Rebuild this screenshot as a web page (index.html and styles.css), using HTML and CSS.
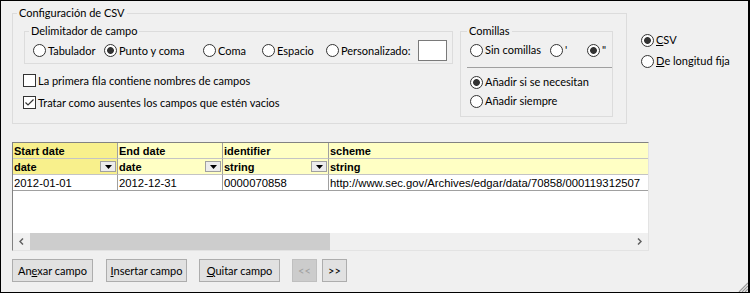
FILE: index.html
```html
<!DOCTYPE html>
<html lang="es">
<head>
    <meta charset="UTF-8">
    <title>Configuración de CSV</title>
    <link rel="stylesheet" href="styles.css">
</head>
<body>
    <div class="window">
        <div class="top">
            <fieldset class="group main">
                <legend>Configuración de CSV</legend>
                <div class="main-body">
                    <div class="left-col">
                        <fieldset class="group delim">
                            <legend>Delimitador de campo</legend>
                            <div class="opt-row">
                                <label class="opt w-tab"><span class="radio"></span>Tabulador</label>
                                <label class="opt w-semi"><span class="radio on"></span>Punto y coma</label>
                                <label class="opt w-comma"><span class="radio"></span>Coma</label>
                                <label class="opt w-space"><span class="radio"></span>Espacio</label>
                                <label class="opt w-custom"><span class="radio"></span>Personalizado:</label>
                                <span class="textbox"></span>
                            </div>
                        </fieldset>
                        <label class="check first"><span class="box"></span>La primera fila contiene nombres de campos</label>
                        <label class="check"><span class="box"><svg width="11" height="11" viewBox="0 0 11 11"><polyline points="1.5,5.5 4,8 9.5,2.5" fill="none" stroke="#333" stroke-width="1.2"/></svg></span>Tratar como ausentes los campos que estén vacios</label>
                    </div>
                    <fieldset class="group quotes">
                        <legend>Comillas</legend>
                        <div class="quote-row">
                            <label class="opt w-none"><span class="radio"></span>Sin comillas</label>
                            <label class="opt w-single"><span class="radio"></span>'</label>
                            <label class="opt"><span class="radio on"></span>"</label>
                        </div>
                        <div class="sep"></div>
                        <label class="opt stack"><span class="radio on"></span>Añadir si se necesitan</label>
                        <label class="opt stack2"><span class="radio"></span>Añadir siempre</label>
                    </fieldset>
                </div>
            </fieldset>
            <div class="format">
                <label class="opt"><span class="radio on"></span><u>C</u>SV</label>
                <label class="opt"><span class="radio"></span><u>D</u>e longitud fija</label>
            </div>
        </div>

        <div class="grid">
            <div class="row head">
                <div class="cell sel">Start date</div>
                <div class="cell">End date</div>
                <div class="cell">identifier</div>
                <div class="cell last">scheme</div>
            </div>
            <div class="row head">
                <div class="cell sel">date<span class="drop"><svg width="7" height="4" viewBox="0 0 7 4"><polygon points="0,0 7,0 3.5,4" fill="#000"/></svg></span></div>
                <div class="cell">date<span class="drop"><svg width="7" height="4" viewBox="0 0 7 4"><polygon points="0,0 7,0 3.5,4" fill="#000"/></svg></span></div>
                <div class="cell">string<span class="drop"><svg width="7" height="4" viewBox="0 0 7 4"><polygon points="0,0 7,0 3.5,4" fill="#000"/></svg></span></div>
                <div class="cell last">string</div>
            </div>
            <div class="row data">
                <div class="cell">2012-01-01</div>
                <div class="cell">2012-12-31</div>
                <div class="cell">0000070858</div>
                <div class="cell last">http://www.sec.gov/Archives/edgar/data/70858/000119312507</div>
            </div>
            <div class="fill"></div>
            <div class="hscroll">
                <span class="arrow"><svg width="5" height="7" viewBox="0 0 5 7"><polyline points="4,0.5 1,3.5 4,6.5" fill="none" stroke="#606060" stroke-width="1.5"/></svg></span>
                <span class="thumb"></span>
                <span class="track"></span>
                <span class="arrow"><svg width="5" height="7" viewBox="0 0 5 7"><polyline points="1,0.5 4,3.5 1,6.5" fill="none" stroke="#606060" stroke-width="1.5"/></svg></span>
            </div>
        </div>

        <div class="buttons">
            <button class="btn">An<u>e</u>xar campo</button>
            <button class="btn"><u>I</u>nsertar campo</button>
            <button class="btn"><u>Q</u>uitar campo</button>
            <button class="btn small" disabled>&lt;&lt;</button>
            <button class="btn small">&gt;&gt;</button>
        </div>

        <svg class="grip" width="11" height="11" viewBox="0 0 11 11">
            <path d="M11 2 L2 11 M11 5 L5 11 M11 8 L8 11" stroke="#999" stroke-width="1.2"/>
        </svg>
    </div>
</body>
</html>
```
FILE: styles.css
```css
body {
    margin: 0;
}

.window {
    position: relative;
    width: 750px;
    height: 293px;
    box-sizing: border-box;
    border: 1px solid #000;
    border-right-width: 2px;
    background: #f0f0f0;
    padding: 5px 0 0 11px;
    font: 11px Lato, sans-serif;
    color: #000;
}

.top {
    display: flex;
    align-items: flex-start;
}

.group {
    margin: 0;
    box-sizing: border-box;
    border: 1px solid #dcdcdc;
    min-width: 0;
}

.group legend {
    line-height: 14px;
    padding: 0 2px;
}

.main {
    width: 615px;
    height: 118px;
    padding: 4px 13px 0 11px;
}

.main > legend {
    margin-left: -7px;
}

.main-body {
    display: flex;
    gap: 7px;
    align-items: flex-start;
}

.delim {
    width: 429px;
    padding: 2px 0 2px 8px;
}

.delim legend {
    margin-left: -4px;
}

.opt-row {
    display: flex;
    align-items: center;
    height: 21px;
}

.opt {
    display: flex;
    align-items: center;
    height: 14px;
    line-height: 14px;
    white-space: nowrap;
}

.radio {
    flex: none;
    width: 13px;
    height: 13px;
    box-sizing: border-box;
    border: 1px solid #333;
    border-radius: 50%;
    background: #fff;
    margin-right: 2px;
}

.radio.on {
    background: radial-gradient(circle, #333 3px, #fff 3.8px);
}

.w-tab { width: 71px; }
.w-semi { width: 99px; }
.w-comma { width: 59px; }
.w-space { width: 64px; }
.w-custom { width: 92px; }

.textbox {
    width: 29px;
    height: 21px;
    box-sizing: border-box;
    border: 1px solid #7a7a7a;
    background: #fff;
}

.check {
    display: flex;
    align-items: center;
    height: 14px;
    margin: 8px 0 0 -1px;
    white-space: nowrap;
}

.check.first {
    margin-top: 9px;
}

.box {
    flex: none;
    display: flex;
    width: 13px;
    height: 13px;
    box-sizing: border-box;
    border: 1px solid #333;
    background: #fff;
    margin-right: 2px;
}

.quotes {
    width: 153px;
    height: 93px;
    padding: 5px 0 0 9px;
}

.quotes legend {
    margin-left: -3px;
}

.quote-row {
    display: flex;
}

.w-none { width: 80px; }
.w-single { width: 37px; }

.sep {
    height: 1px;
    background: #a0a0a0;
    margin: 10px 0 7px -3px;
}

.stack2 {
    margin-top: 5px;
}

.format {
    display: flex;
    flex-direction: column;
    gap: 7px;
    margin: 27px 0 0 14px;
}

/* data grid */
.grid {
    display: flex;
    flex-direction: column;
    width: 637px;
    height: 109px;
    box-sizing: border-box;
    margin-top: 18px;
    border: 1px solid;
    border-color: #828282 #e3e3e3 #e3e3e3 #828282;
    background: #fff;
    font: 11.3px "Liberation Sans", Arial, sans-serif;
}

.row {
    display: grid;
    grid-template-columns: 105px 105px 106px 1fr;
}

.cell {
    display: flex;
    align-items: center;
    justify-content: space-between;
    height: 16px;
    box-sizing: border-box;
    padding: 0 1px;
    border-right: 1px solid #a0a0a0;
    border-bottom: 1px solid #c4c4c4;
    white-space: nowrap;
    overflow: hidden;
}

.cell.last {
    border-right: none;
}

.head .cell {
    background: #ffffc4;
    font-size: 11px;
    font-weight: bold;
}

.head .cell.sel {
    background: #f8f08c;
}

.data .cell {
    border-bottom-color: #a0a0a0;
}

.drop {
    display: flex;
    align-items: center;
    justify-content: center;
    width: 16px;
    height: 11px;
    box-sizing: border-box;
    border: 1px solid #a0a0a0;
    background: #ececec;
}

.fill {
    flex: 1;
}

.hscroll {
    display: flex;
    height: 17px;
    background: #f0f0f0;
}

.arrow {
    display: flex;
    align-items: center;
    justify-content: center;
    width: 17px;
}

.thumb {
    width: 300px;
    background: #cdcdcd;
}

.track {
    flex: 1;
}

/* buttons */
.buttons {
    display: flex;
    margin-top: 8px;
}

.btn {
    width: 81px;
    height: 23px;
    margin-right: 13px;
    padding: 0;
    border: 1px solid #adadad;
    background: #e1e1e1;
    font: 11px Lato, sans-serif;
    color: #000;
}

.btn + .btn {
    margin-right: 12px;
}

.btn.small {
    width: 25px;
    margin-right: 5px;
}

.btn:disabled {
    background: #cccccc;
    border-color: #bfbfbf;
    color: #a0a0a0;
}

.grip {
    position: absolute;
    right: 0;
    bottom: 0;
}
```
